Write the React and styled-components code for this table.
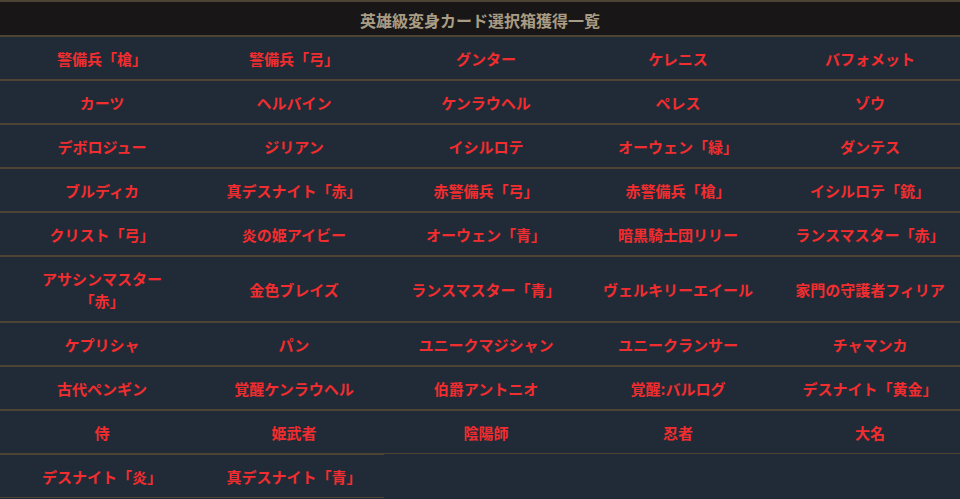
import React from "react";
import styled, { createGlobalStyle } from "styled-components";

const Global = createGlobalStyle`
  html, body { margin: 0; padding: 0; background: #212b37; }
  body { font-family: "Noto Sans CJK JP", "Noto Sans", sans-serif; }
`;

const Wrap = styled.div`
  width: 960px;
  background: #212b37;
`;

const Header = styled.div`
  height: 31px;
  border-top: 2px solid #4e4434;
  border-bottom: 1px solid #4e4434;
  background: #181616;
  color: #a89c84;
  font-size: 16px;
  font-weight: 700;
  display: flex;
  align-items: center;
  justify-content: center;
  padding-top: 2px;
  box-sizing: content-box;
`;

const Grid = styled.div`
  display: grid;
  grid-template-columns: repeat(5, 192px);
`;

const Cell = styled.div`
  border-top: 1px solid #4e4434;
  border-bottom: 1px solid #4e4434;
  padding: 11px 12px 9px 24px;
  line-height: 22px;
  font-size: 15px;
  font-weight: 700;
  color: #f22d2f;
  text-align: center;
  display: flex;
  align-items: center;
  justify-content: center;
  line-break: strict;
`;

const Label = styled.span`
  display: block;
  max-width: 156px;
`;

const items = [
  "警備兵「槍」", "警備兵「弓」", "グンター", "ケレニス", "バフォメット",
  "カーツ", "ヘルバイン", "ケンラウヘル", "ペレス", "ゾウ",
  "デボロジュー", "ジリアン", "イシルロテ", "オーウェン「緑」", "ダンテス",
  "ブルディカ", "真デスナイト「赤」", "赤警備兵「弓」", "赤警備兵「槍」", "イシルロテ「銃」",
  "クリスト「弓」", "炎の姫アイビー", "オーウェン「青」", "暗黒騎士団リリー", "ランスマスター「赤」",
  "アサシンマスター「赤」", "金色ブレイズ", "ランスマスター「青」", "ヴェルキリーエイール", "家門の守護者フィリア",
  "ケプリシャ", "パン", "ユニークマジシャン", "ユニークランサー", "チャマンカ",
  "古代ペンギン", "覚醒ケンラウヘル", "伯爵アントニオ", "覚醒:バルログ", "デスナイト「黄金」",
  "侍", "姫武者", "陰陽師", "忍者", "大名",
  "デスナイト「炎」", "真デスナイト「青」",
];

export default function App() {
  return (
    <Wrap>
      <Global />
      <Header>英雄級変身カード選択箱獲得一覧</Header>
      <Grid>
        {items.map((t, i) => (
          <Cell key={i}><Label>{t}</Label></Cell>
        ))}
      </Grid>
    </Wrap>
  );
}
